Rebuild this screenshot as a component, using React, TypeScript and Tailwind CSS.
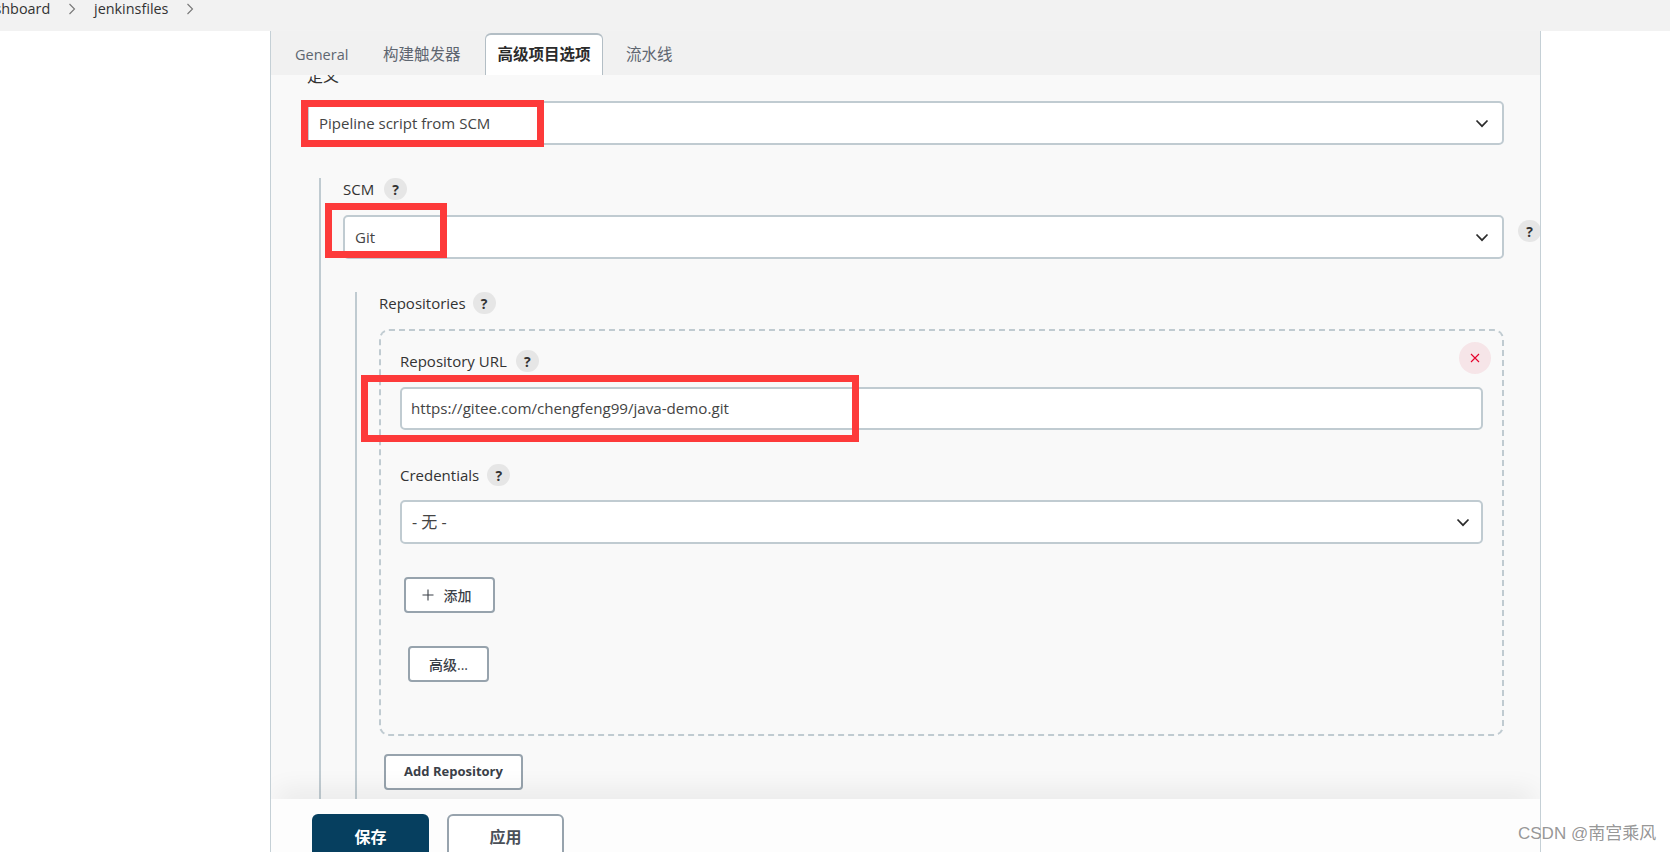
const FONT = "font-['Open_Sans','Noto_Sans_CJK_SC',sans-serif]";

function Help({ className = "" }: { className?: string }) {
  return (
    <span className={`flex h-[22px] w-[23px] shrink-0 items-center justify-center rounded-full bg-[#e6e6e6] text-[14px] font-bold text-[#333] ${className}`}>
      ?
    </span>
  );
}

function Chevron({ className = "" }: { className?: string }) {
  return (
    <svg width="14" height="9" viewBox="0 0 14 9" fill="none" className={className}>
      <path d="M1.5 1.5 L7 7.2 L12.5 1.5" stroke="#2b2b2b" strokeWidth="1.7" />
    </svg>
  );
}

function RedBox({ className }: { className: string }) {
  return <div className={`pointer-events-none absolute z-20 border-[7px] border-[#fd3a3a] ${className}`} />;
}

function Select({ text, h, arrowRight = "pr-[13px]", size = "text-[15px]" }: { text: string; h: string; arrowRight?: string; size?: string }) {
  return (
    <div className={`flex ${h} flex-1 items-center justify-between rounded-[5px] border-2 border-[#c0cbd1] bg-white pl-[10px] ${arrowRight} ${size} text-[#444]`}>
      <span>{text}</span>
      <Chevron />
    </div>
  );
}

function Label({ text, helpClass = "ml-[10px]" }: { text: string; helpClass?: string }) {
  return (
    <div className="flex h-[22px] items-center text-[15px] text-[#333]">
      <span>{text}</span>
      <Help className={helpClass} />
    </div>
  );
}

function Btn({ children, className = "" }: { children: React.ReactNode; className?: string }) {
  return (
    <div className={`flex h-[36px] items-center justify-center rounded-[4px] border-2 border-[#97a3ad] bg-white text-[#3a4048] ${className}`}>
      {children}
    </div>
  );
}

export default function App() {
  return (
    <div className={`relative flex h-[852px] w-[1670px] flex-col overflow-hidden bg-white ${FONT}`}>
      {/* breadcrumb bar */}
      <div className="flex h-[31px] shrink-0 items-start bg-[#f2f2f2] text-[14.4px] text-[#333]">
        <div className="flex h-[17px] items-center">
          <span className="ml-[-24px] w-[76px]">Dashboard</span>
          <svg width="8" height="12" viewBox="0 0 8 12" fill="none" className="ml-[16px]">
            <path d="M1.5 1 L6.5 6 L1.5 11" stroke="#777" strokeWidth="1.1" />
          </svg>
          <span className="ml-[18px] w-[75px]">jenkinsfiles</span>
          <svg width="8" height="12" viewBox="0 0 8 12" fill="none" className="ml-[17px]">
            <path d="M1.5 1 L6.5 6 L1.5 11" stroke="#777" strokeWidth="1.1" />
          </svg>
        </div>
      </div>

      <div className="flex min-h-0 flex-1">
        <div className="w-[270px] shrink-0" />
        <div className="flex w-[1271px] shrink-0 flex-col border-x border-[#c5d0d6]">
          {/* tabs */}
          <div className="flex h-[44px] shrink-0 items-end bg-[#f1f1f1] pl-[24px] text-[15.5px] text-[#5e6670]">
            <span className="mb-[9px] w-[52px] text-[14.5px]">General</span>
            <span className="mb-[9px] ml-[36px] w-[80px] whitespace-nowrap">构建触发器</span>
            <div className="ml-[22px] flex h-[42px] w-[118px] items-center justify-center rounded-t-[6px] border-x border-t-2 border-[#b3bec5] bg-white font-semibold text-[#2b2b2b]">
              高级项目选项
            </div>
            <span className="mb-[9px] ml-[23px] whitespace-nowrap">流水线</span>
          </div>

          {/* scrolled content */}
          <div className="relative min-h-0 flex-1 overflow-hidden bg-[#f9f9f9] pl-[36px] pr-[36px]">
            <div className="mt-[-10px] h-[22px] text-[16px] leading-[22px] text-[#333]">定义</div>
            <div className="relative mt-[14px] flex">
              <Select text="Pipeline script from SCM" h="h-[44px]" />
              <RedBox className="left-[-6px] top-[-1px] h-[47px] w-[243px]" />
            </div>

            {/* SCM section */}
            <div className="ml-[12px] mt-[33px] border-l-2 border-[#c0cbd1] pl-[22px]">
              <Label text="SCM" helpClass="ml-[10px]" />
              <div className="relative mt-[15px] flex h-[44px]">
                <Select text="Git" h="h-[44px]" />
                <RedBox className="left-[-18px] top-[-12px] h-[55px] w-[122px]" />
                <Help className="absolute right-[-37px] top-[5px]" />
              </div>

              {/* Repositories section */}
              <div className="ml-[12px] mt-[33px] border-l-2 border-[#c0cbd1] pl-[22px]">
                <Label text="Repositories" helpClass="ml-[7px]" />
                <div className="relative mt-[15px] h-[407px] rounded-[10px] border-2 border-dashed border-[#c0cbd1] pl-[19px] pr-[19px] pt-[19px]">
                  <div className="absolute right-[11px] top-[11px] flex h-[32px] w-[32px] items-center justify-center rounded-full bg-[#f6e5e8]">
                    <svg width="10" height="10" viewBox="0 0 10 10" fill="none">
                      <path d="M1 1 L9 9 M9 1 L1 9" stroke="#e6002b" strokeWidth="1.1" />
                    </svg>
                  </div>
                  <Label text="Repository URL" helpClass="ml-[9px]" />
                  <div className="relative mt-[15px] flex h-[43px]">
                    <div className="flex h-[43px] flex-1 items-center rounded-[5px] border-2 border-[#c0cbd1] bg-white pl-[9px] text-[15.15px] text-[#444]">
                      https://gitee.com/chengfeng99/java-demo.git
                    </div>
                    <RedBox className="left-[-39px] top-[-12px] h-[67px] w-[498px]" />
                  </div>
                  <div className="mt-[34px]">
                    <Label text="Credentials" helpClass="ml-[8px]" />
                  </div>
                  <div className="mt-[14px] flex">
                    <Select text="- 无 -" h="h-[44px]" arrowRight="pr-[11px]" size="text-[16px]" />
                  </div>
                  <div className="mt-[33px] flex">
                    <Btn className="ml-[4px] w-[91px] gap-[10px] pr-[6px] text-[14px] font-medium">
                      <svg width="12" height="12" viewBox="0 0 12 12" fill="none">
                        <path d="M6 0.5 V11.5 M0.5 6 H11.5" stroke="#3a4048" strokeWidth="1.1" />
                      </svg>
                      <span>添加</span>
                    </Btn>
                  </div>
                  <div className="mt-[33px] flex">
                    <Btn className="ml-[8px] w-[81px] text-[14px] font-medium">高级...</Btn>
                  </div>
                </div>
                <div className="mt-[18px] flex pb-[30px]">
                  <Btn className="ml-[5px] w-[139px] text-[13px] font-bold">Add Repository</Btn>
                </div>
              </div>
            </div>
            <div className="absolute bottom-[-6px] left-[14px] right-[14px] h-[6px] shadow-[0_0_26px_8px_rgba(0,0,0,0.075)]" />
          </div>

          {/* footer */}
          <div className="flex h-[53px] shrink-0 items-start gap-[18px] bg-[#fdfdfd] pl-[41px] pt-[15px]">
            <div className="flex h-[50px] w-[117px] items-center justify-center rounded-[6px] bg-[#063f5f] pb-[4px] text-[16px] font-bold text-white">
              保存
            </div>
            <div className="flex h-[50px] w-[117px] items-center justify-center rounded-[6px] border-2 border-[#97a3ad] bg-white pb-[4px] text-[16px] font-bold text-[#4a5058]">
              应用
            </div>
          </div>
        </div>
      </div>

      <div className="absolute left-[1518px] top-[823px] z-30 whitespace-nowrap font-['Liberation_Sans','Noto_Sans_CJK_SC',sans-serif] text-[17px] leading-[22px] text-[#8a8a8a]/90">
        CSDN @南宫乘风
      </div>
    </div>
  );
}
